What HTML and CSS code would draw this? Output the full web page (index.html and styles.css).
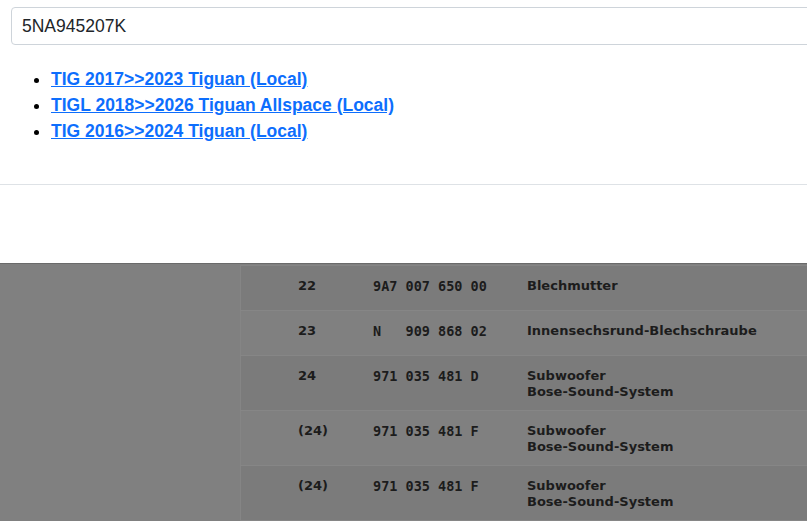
FILE: index.html
```html
<!DOCTYPE html>
<html lang="de">
<head>
    <meta charset="UTF-8">
    <meta name="viewport" content="width=device-width, initial-scale=1.0">
    <title>Teilesuche</title>
    <link rel="stylesheet" href="styles.css">
</head>
<body>
    <div class="search-panel">
        <input type="text" class="search-input" value="5NA945207K">

        <ul class="results">
            <li><a href="#">TIG 2017&gt;&gt;2023 Tiguan (Local)</a></li>
            <li><a href="#">TIGL 2018&gt;&gt;2026 Tiguan Allspace (Local)</a></li>
            <li><a href="#">TIG 2016&gt;&gt;2024 Tiguan (Local)</a></li>
        </ul>

        <hr class="divider">
    </div>

    <div class="backdrop">
        <table class="parts">
            <tr>
                <td class="pos">22</td>
                <td class="num">9A7 007 650 00</td>
                <td class="desc">Blechmutter</td>
            </tr>
            <tr>
                <td class="pos">23</td>
                <td class="num">N &nbsp; 909 868 02</td>
                <td class="desc">Innensechsrund-Blechschraube</td>
            </tr>
            <tr>
                <td class="pos">24</td>
                <td class="num">971 035 481 D</td>
                <td class="desc">Subwoofer<br>Bose-Sound-System</td>
            </tr>
            <tr>
                <td class="pos">(24)</td>
                <td class="num">971 035 481 F</td>
                <td class="desc">Subwoofer<br>Bose-Sound-System</td>
            </tr>
            <tr>
                <td class="pos">(24)</td>
                <td class="num">971 035 481 F</td>
                <td class="desc">Subwoofer<br>Bose-Sound-System</td>
            </tr>
        </table>
    </div>
</body>
</html>
```

FILE: styles.css
```css
body {
    margin: 0;
    font-family: 'Liberation Sans', Arial, sans-serif;
    background-color: #fff;
    overflow: hidden;
    height: 100vh;
}

.search-panel {
    height: 263px;
    padding: 7px 0 0 11px;
    box-sizing: border-box;
}

.search-input {
    display: block;
    width: 820px;
    height: 38px;
    box-sizing: border-box;
    padding: 6px 10px;
    font-family: 'Liberation Sans', Arial, sans-serif;
    font-size: 17.5px;
    color: #212529;
    border: 1px solid #ced4da;
    border-radius: 4px;
    outline: none;
}

.results {
    margin: 21px 0 0;
    padding-left: 40px;
    font-size: 17.5px;
    line-height: 26px;
}

.results a {
    color: #0d6efd;
    font-weight: bold;
}

.divider {
    margin: 40px 0 0 -11px;
    border: none;
    border-top: 1px solid #dee2e6;
}

.backdrop {
    background-color: #808080;
    border-top: 1px solid #6a6a6a;
    padding: 1px 0 0 240px;
    height: 100%;
}

.parts {
    width: 100%;
    border-collapse: collapse;
    background-color: #7b7b7b;
    border-left: 1px solid #858585;
    border-top: 1px solid #858585;
}

.parts tr {
    height: 45px;
    border-bottom: 1px solid #868686;
}

.parts tr:nth-child(even) {
    background-color: #808080;
}

.parts td {
    vertical-align: top;
    padding: 12px 0 10px;
    line-height: 16px;
    color: #1c1c1c;
    font-weight: bold;
}

.parts .pos {
    width: 75px;
    padding-left: 57px;
    font-family: 'DejaVu Sans', Verdana, sans-serif;
    font-size: 13px;
}

.parts .num {
    width: 154px;
    font-family: 'DejaVu Sans Mono', monospace;
    font-size: 13.5px;
}

.parts .desc {
    font-family: 'DejaVu Sans', Verdana, sans-serif;
    font-size: 13px;
}
```
